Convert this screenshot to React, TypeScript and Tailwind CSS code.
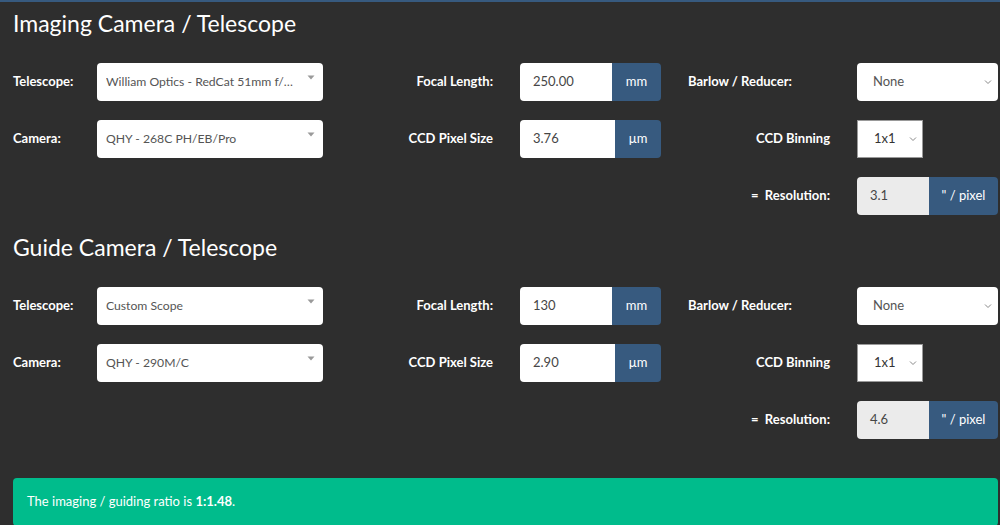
import React from 'react'

const font = { fontFamily: 'Lato, "Open Sans", sans-serif' }

function Caret() {
  return (
    <svg width="8" height="5" viewBox="0 0 8 5" className="absolute right-[8px] top-[12px]">
      <path d="M0.5 0.5 L7.5 0.5 L4 4.5 Z" fill="#9a9a9a" />
    </svg>
  )
}

function Chevron({ className = '' }: { className?: string }) {
  return (
    <svg width="8" height="5" viewBox="0 0 8 5" className={`absolute top-1/2 -translate-y-1/2 ${className}`}>
      <path d="M1 1 L4 4 L7 1" fill="none" stroke="#888" strokeWidth="1" />
    </svg>
  )
}

function ComboSelect({ value }: { value: string }) {
  return (
    <div className="relative flex h-[38px] w-[226px] shrink-0 items-center rounded-[4px] bg-white pl-[9px] text-[12.2px] text-[#555]">
      <span className="truncate pr-[26px]">{value}</span>
      <Caret />
    </div>
  )
}

function UnitInput({ value, unit, unitWidth }: { value: string; unit: string; unitWidth: string }) {
  return (
    <div className="ml-[27px] flex h-[38px] w-[141px] shrink-0 overflow-hidden rounded-[4px] text-[13px]">
      <div className="flex flex-1 items-center bg-white pl-[13px] text-[#464646]">{value}</div>
      <div className={`flex items-center justify-center bg-[#375a7f] text-white ${unitWidth}`}>{unit}</div>
    </div>
  )
}

function Label({ children, className = '' }: { children: React.ReactNode; className?: string }) {
  return <div className={`shrink-0 text-[13px] font-bold text-white ${className}`}>{children}</div>
}

function Section({
  title,
  scope,
  camera,
  focal,
  pixel,
  resolution,
}: {
  title: string
  scope: string
  camera: string
  focal: string
  pixel: string
  resolution: string
}) {
  return (
    <section>
      <h3 className="pt-[6px] text-[23px] leading-[30px] text-white">{title}</h3>
      <div className="mt-[25px] flex flex-col gap-[19px]">
        <div className="flex h-[38px] items-center">
          <Label className="w-[84px]">Telescope:</Label>
          <ComboSelect value={scope} />
          <Label className="w-[170px] text-right">Focal Length:</Label>
          <UnitInput value={focal} unit="mm" unitWidth="w-[49px]" />
          <Label className="ml-[27px] w-[142px]">Barlow / Reducer:</Label>
          <div className="relative ml-[27px] flex h-[38px] w-[141px] shrink-0 items-center rounded-[4px] bg-white pl-[16px] text-[13px] text-[#555]">
            None
            <Chevron className="right-[6px]" />
          </div>
        </div>
        <div className="flex h-[38px] items-center">
          <Label className="w-[84px]">Camera:</Label>
          <ComboSelect value={camera} />
          <Label className="w-[170px] text-right">CCD Pixel Size</Label>
          <UnitInput value={pixel} unit="µm" unitWidth="w-[46px]" />
          <Label className="ml-[27px] w-[142px] text-right">CCD Binning</Label>
          <div className="relative ml-[27px] flex h-[38px] w-[66px] shrink-0 items-center border border-[#999] bg-white pl-[16px] text-[13px] text-[#333]">
            1x1
            <Chevron className="right-[5px]" />
          </div>
        </div>
        <div className="flex h-[38px] items-center">
          <div className="w-[675px] shrink-0" />
          <Label className="w-[142px] text-right">=&nbsp;&nbsp;Resolution:</Label>
          <div className="ml-[27px] flex h-[38px] w-[141px] shrink-0 overflow-hidden rounded-[4px] text-[13px]">
            <div className="flex w-[72px] items-center bg-[#ebebeb] pl-[13px] text-[#464646]">{resolution}</div>
            <div className="flex flex-1 items-center justify-center bg-[#375a7f] text-white">" / pixel</div>
          </div>
        </div>
      </div>
    </section>
  )
}

export default function App() {
  return (
    <div className="h-[525px] overflow-hidden border-t-2 border-[#375a7f] bg-[#2e2e2e] pl-[13px] pr-[2px]" style={font}>
      <Section
        title="Imaging Camera / Telescope"
        scope="William Optics - RedCat 51mm f/4.9"
        camera="QHY - 268C PH/EB/Pro"
        focal="250.00"
        pixel="3.76"
        resolution="3.1"
      />
      <div className="mt-[11px]">
        <Section
          title="Guide Camera / Telescope"
          scope="Custom Scope"
          camera="QHY - 290M/C"
          focal="130"
          pixel="2.90"
          resolution="4.6"
        />
      </div>
      <div className="mt-[39px] rounded-[4px] bg-[#00bc8c] px-[14px] py-[14px] text-[13px] text-white">
        The imaging / guiding ratio is <b>1:1.48</b>.
      </div>
    </div>
  )
}
